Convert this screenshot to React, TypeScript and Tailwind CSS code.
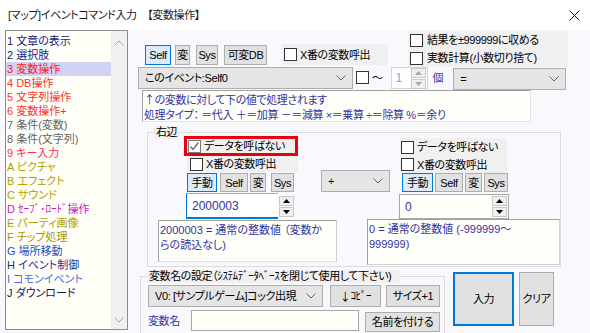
import React from "react";

const items: { label: string; color: string; selected?: boolean }[] = [
  { label: "1 文章の表示", color: "#202078" },
  { label: "2 選択肢", color: "#202078" },
  { label: "3 変数操作", color: "#ff2020", selected: true },
  { label: "4 DB操作", color: "#ff3030" },
  { label: "5 文字列操作", color: "#ff3030" },
  { label: "6 変数操作+", color: "#ff3030" },
  { label: "7 条件(変数)", color: "#666666" },
  { label: "8 条件(文字列)", color: "#666666" },
  { label: "9 キー入力", color: "#ff2a55" },
  { label: "A ピクチャ", color: "#b0a000" },
  { label: "B エフェクト", color: "#b0a000" },
  { label: "C サウンド", color: "#b0a000" },
  { label: "D ｾｰﾌﾞ･ﾛｰﾄﾞ操作", color: "#d018c0" },
  { label: "E パーティ画像", color: "#b0a000" },
  { label: "F チップ処理", color: "#a89400" },
  { label: "G 場所移動", color: "#2050c8" },
  { label: "H イベント制御", color: "#203090" },
  { label: "I コモンイベント", color: "#4a6ae4" },
  { label: "J ダウンロード", color: "#141450" },
];

function Chevron({ down = true, color = "#606060" }: { down?: boolean; color?: string }) {
  return (
    <svg width="10" height="6" viewBox="0 0 10 6" className="shrink-0">
      <polyline
        points={down ? "0.5,0.5 5,5 9.5,0.5" : "0.5,5.5 5,1 9.5,5.5"}
        fill="none"
        stroke={color}
        strokeWidth="1"
      />
    </svg>
  );
}

function Check({ checked = false }: { checked?: boolean }) {
  return (
    <span
      className={`flex h-[13px] w-[13px] shrink-0 items-center justify-center border bg-white ${
        checked ? "border-[#7a7a7a]" : "border-[#333333]"
      }`}
    >
      {checked && (
        <svg width="11" height="11" viewBox="0 0 11 11">
          <polyline points="1.5,5.5 4,8.5 9.5,1.5" fill="none" stroke="#6a6a6a" strokeWidth="1.4" />
        </svg>
      )}
    </span>
  );
}

function Btn({
  children,
  active = false,
  className = "",
}: {
  children: React.ReactNode;
  active?: boolean;
  className?: string;
}) {
  return (
    <div
      className={`flex shrink-0 items-center justify-center whitespace-nowrap border ${
        active ? "border-[#0078d7] bg-[#dcebf9]" : "border-[#adadad] bg-[#e1e1e1]"
      } ${className}`}
    >
      {children}
    </div>
  );
}

function Combo({ children, className = "" }: { children: React.ReactNode; className?: string }) {
  return (
    <div
      className={`flex shrink-0 items-center justify-between border border-[#adadad] bg-[#e5e5e5] pl-[6px] pr-[6px] ${className}`}
    >
      <span className="whitespace-nowrap">{children}</span>
      <Chevron />
    </div>
  );
}

function SpinArrows({ dim = false }: { dim?: boolean }) {
  const c = dim ? "#a8a8a8" : "#000000";
  return (
    <div className="flex w-[15px] shrink-0 flex-col gap-[1px]">
      <div className="flex h-[10px] items-center justify-center border border-[#c8c8c8] bg-[#f0f0f0]">
        <svg width="7" height="4" viewBox="0 0 7 4">
          <polygon points="0,4 3.5,0 7,4" fill={c} />
        </svg>
      </div>
      <div className="flex h-[10px] items-center justify-center border border-[#c8c8c8] bg-[#f0f0f0]">
        <svg width="7" height="4" viewBox="0 0 7 4">
          <polygon points="0,0 3.5,4 7,0" fill={c} />
        </svg>
      </div>
    </div>
  );
}

const cjk = "font-['Noto_Sans_CJK_JP',sans-serif]";

export default function App() {
  return (
    <div className="h-[333px] w-[590px] overflow-hidden bg-[#f8f8fd] font-['Liberation_Sans','Noto_Sans_CJK_JP',sans-serif] text-[11px] leading-[14px] tracking-[-0.4px] text-black [font-feature-settings:'palt']">
      {/* title bar */}
      <div className="flex h-[30px] items-center justify-between bg-white pl-[8px] pr-[10px]">
        <span className="text-[#1a1a1a]">[マップ]イベントコマンド入力　【変数操作】</span>
        <svg width="11" height="11" viewBox="0 0 11 11">
          <path d="M0.5 0.5 L10.5 10.5 M10.5 0.5 L0.5 10.5" stroke="#111" strokeWidth="1" />
        </svg>
      </div>

      <div className="flex">
        {/* command list */}
        <div className="ml-[5px] flex h-[300px] w-[123px] shrink-0 border border-[#8c8c8c] bg-[#fffff8]">
          <div className="flex flex-1 flex-col pt-[3px] tracking-normal">
            {items.map((it) => (
              <div
                key={it.label}
                className={`h-[14px] whitespace-nowrap pl-[1px] ${it.selected ? "bg-[#d2d2f4]" : ""}`}
                style={{ color: it.color }}
              >
                {it.label}
              </div>
            ))}
          </div>
          <div className="flex w-[16px] flex-col items-center justify-between bg-[#f0f0f0] pb-[6px] pt-[9px]">
            <Chevron down={false} color="#a6a6a6" />
            <Chevron color="#a6a6a6" />
          </div>
        </div>

        {/* main panel */}
        <div className="flex w-[462px] flex-col">
          {/* row A */}
          <div className="flex h-[37px] items-start">
            <div className="ml-[17px] mt-[15px] flex h-[20px]">
              <Btn active className="w-[26px]">Self</Btn>
              <Btn className="ml-[4px] w-[15px]">変</Btn>
              <Btn className="ml-[6px] w-[22px]">Sys</Btn>
              <Btn className="ml-[6px] w-[43px]">可変DB</Btn>
            </div>
            <div className="ml-[15px] mt-[14px] flex h-[21px] w-[106px] items-center bg-[#f0f0f0] pl-[2px]">
              <Check />
              <span className="ml-[3px] whitespace-nowrap">X番の変数呼出</span>
            </div>
            <div className="ml-[20px] mt-[1px] flex w-[160px] flex-col">
              <div className="flex h-[18px] items-center bg-[#f0f0f0] pl-[2px]">
                <Check />
                <span className="ml-[4px] whitespace-nowrap">結果を±999999に収める</span>
              </div>
              <div className="flex h-[18px] items-center bg-[#f0f0f0] pl-[2px]">
                <Check />
                <span className="ml-[4px] whitespace-nowrap">実数計算(小数切り捨て)</span>
              </div>
            </div>
          </div>

          {/* row B */}
          <div className="flex h-[23px] items-start">
            <Combo className="ml-[10px] h-[22px] w-[215px]">このイベント:Self0</Combo>
            <div className="ml-[3px] mt-[4px]">
              <Check />
            </div>
            <span className="ml-[3px] mt-[4px]">～</span>
            <div className="ml-[8px] flex h-[22px] w-[37px] items-center border border-[#d4d4d4] bg-white pl-[4px] pr-[1px]">
              <span className="flex-1 text-[12px] tracking-normal text-[#9a9acc]">1</span>
              <SpinArrows dim />
            </div>
            <span className="ml-[5px] mt-[4px] text-[#3a3aa0]">個</span>
            <Combo className="ml-[10px] mt-[1px] h-[22px] w-[113px]">=</Combo>
          </div>

          {/* description */}
          <div className="ml-[14px] h-[32px] w-[389px] border-b border-l border-r border-t border-b-[#e4e4e4] border-l-[#a0a0a0] border-r-[#e4e4e4] border-t-[#a0a0a0] bg-[#fffffa] pl-[1px] pt-[1px] leading-[15px] text-[#33339f]">
            <div>
              <span className={cjk}>↑</span>の変数に対して下の値で処理されます
            </div>
            <div className="whitespace-nowrap">処理タイプ： ＝代入 ＋＝加算 －＝減算 ×＝乗算 ÷＝除算 %＝余り</div>
          </div>

          {/* right side group */}
          <div className="relative ml-[19px] mt-[10px] h-[135px] w-[414px] border border-[#dcdcdc]">
            <span className="absolute left-[6px] top-[-7px] bg-[#f0f0f0] px-[2px] leading-[13px]">右辺</span>

            <div className="flex items-start pt-[3px]">
              {/* left operand */}
              <div className="ml-[36px] flex w-[114px] flex-col">
                <div className="flex h-[20px] items-center border-[3px] border-[#e60012] bg-[#f0f0f0] pl-[1px]">
                  <Check checked />
                  <span className="ml-[3px] whitespace-nowrap">データを呼ばない</span>
                </div>
                <div className="ml-[3px] flex h-[16px] items-center bg-[#f0f0f0] pl-[3px]">
                  <Check />
                  <span className="ml-[3px] whitespace-nowrap">X番の変数呼出</span>
                </div>
                <div className="ml-[3px] mt-[1px] flex h-[19px]">
                  <Btn active className="w-[30px]">手動</Btn>
                  <Btn className="ml-[3px] w-[28px]">Self</Btn>
                  <Btn className="ml-[2px] w-[16px]">変</Btn>
                  <Btn className="ml-[5px] w-[23px]">Sys</Btn>
                </div>
                <div className="ml-[2px] mt-[1px] flex h-[26px]">
                  <div className="flex w-[92px] items-center border-b-2 border-l border-t border-b-[#0078d7] border-l-[#0078d7] border-t-[#a8a8a8] bg-white pl-[5px] text-[12px] tracking-normal text-[#33339f]">
                    2000003
                  </div>
                  <div className="ml-[1px] mt-[3px]">
                    <SpinArrows />
                  </div>
                </div>
              </div>

              {/* operator */}
              <Combo className="ml-[23px] mt-[34px] h-[22px] w-[69px]">+</Combo>

              {/* right operand */}
              <div className="ml-[9px] flex w-[110px] flex-col">
                <div className="ml-[1px] mt-[2px] flex h-[18px] w-[107px] items-center bg-[#f0f0f0] pl-[1px]">
                  <Check />
                  <span className="ml-[3px] whitespace-nowrap">データを呼ばない</span>
                </div>
                <div className="ml-[1px] flex h-[17px] w-[107px] items-center bg-[#f0f0f0] pl-[1px]">
                  <Check />
                  <span className="ml-[3px] whitespace-nowrap">X番の変数呼出</span>
                </div>
                <div className="ml-[3px] flex h-[19px]">
                  <Btn active className="w-[31px]">手動</Btn>
                  <Btn className="ml-[2px] w-[28px]">Self</Btn>
                  <Btn className="ml-[2px] w-[17px]">変</Btn>
                  <Btn className="ml-[2px] w-[24px]">Sys</Btn>
                </div>
                <div className="mt-[2px] flex h-[25px] items-center border border-[#a8a8a8] bg-[#fffffa] pl-[5px] pr-[1px]">
                  <span className="flex-1 text-[12px] tracking-normal text-[#33339f]">0</span>
                  <SpinArrows />
                </div>
              </div>
            </div>

            <div className="flex items-start">
              <div className="ml-[10px] mt-[1px] h-[42px] w-[179px] border border-b-[#e0e0e0] border-l-[#a0a0a0] border-r-[#d0d0d0] border-t-[#a0a0a0] bg-[#fffffa] pl-[1px] pt-[2px] leading-[15px] tracking-normal text-[#33339f]">
                2000003 = 通常の整数値 （変数か
                <br />
                らの読込なし)
              </div>
              <div className="ml-[30px] h-[46px] w-[193px] border border-b-[#d0d0d0] border-l-[#a0a0a0] border-r-[#d0d0d0] border-t-[#a0a0a0] bg-[#fffffa] pl-[1px] pt-[2px] leading-[15px] tracking-normal text-[#33339f]">
                0 = 通常の整数値 (-999999～
                <br />
                999999)
              </div>
            </div>
          </div>

          {/* bottom */}
          <div className="mt-[3px] flex items-start">
            <div className="relative ml-[12px] mt-[6px] h-[60px] w-[305px] border-l border-r border-t border-[#dcdcdc]">
              <span className="absolute left-[6px] top-[-7px] whitespace-nowrap bg-[#f0f0f0] pl-[2px] pr-[9px] leading-[13px]">
                変数名の設定（ｼｽﾃﾑﾃﾞｰﾀﾍﾞｰｽを閉じて使用して下さい)
              </span>
              <div className="mt-[8px] flex h-[22px]">
                <Combo className="ml-[7px] h-[22px] w-[175px]">V0: [サンプルゲーム]コック出現</Combo>
                <Btn className="ml-[7px] w-[51px]">
                  <span className={cjk}>↓</span>ｺﾋﾟｰ
                </Btn>
                <Btn className="ml-[5px] w-[54px]">サイズ+1</Btn>
              </div>
              <div className="mt-[3px] flex items-start">
                <span className="ml-[7px] mt-[4px] w-[36px] text-[#33339f]">変数名</span>
                <div className="ml-[7px] h-[21px] w-[168px] border border-[#a8a8a8] bg-[#fffffa]" />
                <Btn className="ml-[6px] mt-[2px] h-[20px] w-[75px]">名前を付ける</Btn>
              </div>
            </div>
            <Btn className="ml-[8px] mt-[2px] h-[54px] w-[61px] border-2 !border-[#0078d7]">入力</Btn>
            <Btn className="ml-[5px] mt-[2px] h-[54px] w-[35px]">クリア</Btn>
          </div>
        </div>
      </div>
    </div>
  );
}
